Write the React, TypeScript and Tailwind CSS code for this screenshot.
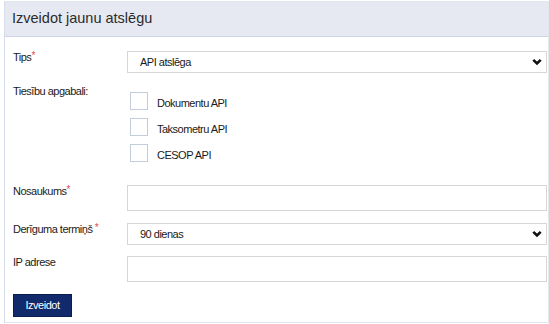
import { useState } from "react";

function Chevron() {
  return (
    <svg
      className="pointer-events-none absolute right-[5px] top-1/2 -translate-y-1/2"
      width="10"
      height="7"
      viewBox="0 0 10 7"
      aria-hidden="true"
    >
      <path d="M1.3 1.3L5 5l3.7-3.7" fill="none" stroke="#111" strokeWidth="2.6" />
    </svg>
  );
}

function Label({ text, required, space }: { text: string; required?: boolean; space?: boolean }) {
  return (
    <label className="w-[114px] shrink-0 text-[11px] leading-[13px] tracking-[-0.5px] text-[#1a1a1a]">
      {text}
      {required && (
        <span className="relative -top-[2px] text-[10px] text-[#e24b4b]">{space ? " *" : "*"}</span>
      )}
    </label>
  );
}

export default function App() {
  const [tips, setTips] = useState("api");
  const [term, setTerm] = useState("90");
  const [scopes, setScopes] = useState<string[]>([]);

  const scopeItems = ["Dokumentu API", "Taksometru API", "CESOP API"];

  const toggle = (s: string) =>
    setScopes((prev) => (prev.includes(s) ? prev.filter((x) => x !== s) : [...prev, s]));

  const selectCls =
    "block h-[22px] w-full appearance-none border border-[#d6d6d6] bg-white pl-[12px] pr-[20px] text-[11px] tracking-[-0.5px] text-[#1a1a1a] outline-none";
  const inputCls =
    "block h-[26px] w-full border border-[#d6d6d6] bg-white px-[8px] text-[11px] outline-none";

  return (
    <div className="h-[324px] w-[549px] bg-white pt-[1px] font-['Liberation_Sans',Arial,sans-serif]">
      <div className="ml-[4px] w-[545px] border border-[#e2e6ee] border-l-[#d6dce8]">
        {/* Header */}
        <div className="flex h-[35px] items-center border-b border-[#cdd5e5] bg-[#e6e9f1] px-[7px]">
          <h1 className="text-[14.5px] text-[#2b2b2b]">Izveidot jaunu atslēgu</h1>
        </div>

        <form className="flex flex-col pl-[8px] pr-[1px] pb-[5px]" onSubmit={(e) => e.preventDefault()}>
          {/* Tips */}
          <div className="mt-[14px] flex">
            <Label text="Tips" required />
            <div className="relative flex-1">
              <select className={selectCls} value={tips} onChange={(e) => setTips(e.target.value)}>
                <option value="api">API atslēga</option>
              </select>
              <Chevron />
            </div>
          </div>

          {/* Tiesību apgabali */}
          <div className="mt-[12px] flex">
            <Label text="Tiesību apgabali:" />
            <div className="mt-[7px] flex flex-col gap-[8px] pl-[3px]">
              {scopeItems.map((s) => (
                <label
                  key={s}
                  className="flex h-[18px] items-start gap-[9px] text-[11px] leading-[13px] tracking-[-0.5px] text-[#1a1a1a]"
                >
                  <input
                    type="checkbox"
                    checked={scopes.includes(s)}
                    onChange={() => toggle(s)}
                    className="h-[18px] w-[18px] shrink-0 appearance-none border border-[#c3ccda] bg-white checked:bg-[#102a6b]"
                  />
                  <span className="pt-[5px]">{s}</span>
                </label>
              ))}
            </div>
          </div>

          {/* Nosaukums */}
          <div className="mt-[23px] flex">
            <Label text="Nosaukums" required />
            <input type="text" className={inputCls} />
          </div>

          {/* Derīguma termiņš */}
          <div className="mt-[12px] flex">
            <Label text="Derīguma termiņš" required space />
            <div className="relative flex-1">
              <select className={selectCls} value={term} onChange={(e) => setTerm(e.target.value)}>
                <option value="30">30 dienas</option>
                <option value="90">90 dienas</option>
                <option value="180">180 dienas</option>
              </select>
              <Chevron />
            </div>
          </div>

          {/* IP adrese */}
          <div className="mt-[11px] flex">
            <Label text="IP adrese" />
            <input type="text" className={inputCls} />
          </div>

          <div className="mt-[12px]">
            <button
              type="submit"
              className="block h-[23px] w-[59px] border border-[#0a1d52] bg-[#102a6b] text-[11px] tracking-[-0.5px] text-white"
            >
              Izveidot
            </button>
          </div>
        </form>
      </div>
    </div>
  );
}
